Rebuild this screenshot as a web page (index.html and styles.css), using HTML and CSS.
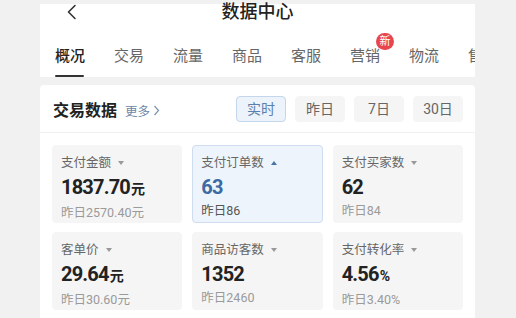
FILE: index.html
```html
<!DOCTYPE html>
<html lang="zh">
<head>
<meta charset="utf-8">
<link rel="stylesheet" href="styles.css">
</head>
<body>
<div class="page">
  <header class="top">
    <div class="title-row">
      <svg class="back" width="12" height="16" viewBox="0 0 12 16"><path d="M9 1.5 L2.5 8 L9 14.5" fill="none" stroke="#333" stroke-width="1.6" stroke-linecap="round" stroke-linejoin="round"/></svg>
      <div class="title">数据中心</div>
    </div>
    <nav class="tabs">
      <div class="tab active">概况</div>
      <div class="tab">交易</div>
      <div class="tab">流量</div>
      <div class="tab">商品</div>
      <div class="tab">客服</div>
      <div class="tab badge-tab">营销<span class="badge">新</span></div>
      <div class="tab">物流</div>
      <div class="tab">售后</div>
    </nav>
  </header>

  <section class="panel">
    <div class="panel-head">
      <div class="head-left">
        <span class="panel-title">交易数据</span>
        <span class="more">更多<svg width="7" height="11" viewBox="0 0 7 11"><path d="M1.5 1 L5.5 5.5 L1.5 10" fill="none" stroke="#7d93ad" stroke-width="1.2"/></svg></span>
      </div>
      <div class="ranges">
        <div class="range on">实时</div>
        <div class="range">昨日</div>
        <div class="range">7日</div>
        <div class="range">30日</div>
      </div>
    </div>
    <div class="grid">
      <div class="card">
        <div class="label">支付金额<i class="tri down"></i></div>
        <div class="value">1837.70<small>元</small></div>
        <div class="prev">昨日2570.40元</div>
      </div>
      <div class="card sel">
        <div class="label">支付订单数<i class="tri up"></i></div>
        <div class="value">63</div>
        <div class="prev">昨日86</div>
      </div>
      <div class="card">
        <div class="label">支付买家数<i class="tri down"></i></div>
        <div class="value">62</div>
        <div class="prev">昨日84</div>
      </div>
      <div class="card">
        <div class="label">客单价<i class="tri down"></i></div>
        <div class="value">29.64<small>元</small></div>
        <div class="prev">昨日30.60元</div>
      </div>
      <div class="card">
        <div class="label">商品访客数<i class="tri down"></i></div>
        <div class="value">1352</div>
        <div class="prev">昨日2460</div>
      </div>
      <div class="card">
        <div class="label">支付转化率<i class="tri down"></i></div>
        <div class="value">4.56<small>%</small></div>
        <div class="prev">昨日3.40%</div>
      </div>
    </div>
  </section>
</div>
</body>
</html>
```

FILE: styles.css
```css
* { box-sizing: border-box; }
html, body { margin: 0; padding: 0; }
body {
  background: #f1f1f1;
  font-family: Roboto, "Noto Sans CJK SC", "Noto Sans", sans-serif;
  color: #222;
  width: 516px;
  height: 318px;
  overflow: hidden;
}
.page {
  width: 435px;
  margin-left: 40px;
  padding-top: 4px;
}
.top {
  background: #fff;
  height: 73px;
  display: flex;
  flex-direction: column;
}
.title-row {
  position: relative;
  height: 16px;
  display: flex;
  align-items: center;
  justify-content: center;
}
.back {
  position: absolute;
  left: 26px;
  top: 0;
}
.title {
  font-size: 18px;
  line-height: 16px;
  font-weight: 500;
  color: #222;
}
.tabs {
  flex: 1;
  display: flex;
  gap: 29px;
  padding-left: 15px;
  overflow: hidden;
  white-space: nowrap;
}
.tab {
  position: relative;
  flex: none;
  font-size: 15px;
  line-height: 20px;
  padding-top: 26px;
  color: #666;
  height: 57px;
}
.tab.active {
  color: #222;
  font-weight: 500;
}
.tab.active::after {
  content: "";
  position: absolute;
  left: 0;
  right: 1px;
  bottom: 0;
  height: 2px;
  background: #333;
  border-radius: 1px;
}
.badge {
  position: absolute;
  left: 26px;
  top: 13px;
  width: 18px;
  height: 17px;
  border-radius: 9px;
  background: #e8464f;
  color: #fff;
  font-size: 11px;
  line-height: 17px;
  text-align: center;
}
.panel {
  margin-top: 8px;
  background: #fff;
  height: 240px;
  border-radius: 4px 4px 0 0;
}
.panel-head {
  display: flex;
  align-items: center;
  justify-content: space-between;
  padding: 11px 12px 10px 13px;
  border-bottom: 1px solid #f0f0f0;
}
.head-left {
  display: flex;
  align-items: baseline;
  gap: 8px;
}
.panel-title {
  font-size: 16px;
  font-weight: 700;
  color: #222;
}
.more {
  font-size: 12.5px;
  color: #6d86a6;
  display: inline-flex;
  align-items: center;
  gap: 3px;
}
.ranges {
  display: flex;
  gap: 9px;
}
.range {
  width: 50px;
  height: 26px;
  line-height: 24px;
  border: 1px solid #f5f5f5;
  background: #f5f5f5;
  border-radius: 4px;
  font-size: 14px;
  color: #666;
  text-align: center;
}
.range.on {
  background: #ecf3fb;
  border-color: #c4d6ea;
  color: #5a80ad;
}
.grid {
  display: grid;
  grid-template-columns: repeat(3, 1fr);
  column-gap: 10px;
  row-gap: 9px;
  padding: 12px 12px 0 12px;
}
.card {
  height: 78px;
  background: #f5f5f5;
  border: 1px solid #f5f5f5;
  border-radius: 4px;
  padding: 9px 8px 0 8px;
}
.card.sel {
  background: #eef4fc;
  border-color: #cddcee;
}
.label {
  font-size: 12.5px;
  line-height: 16px;
  color: #666;
  display: flex;
  align-items: center;
}
.tri {
  display: inline-block;
  margin-left: 7px;
  width: 0;
  height: 0;
  border-left: 3.5px solid transparent;
  border-right: 3.5px solid transparent;
}
.tri.down { border-top: 4px solid #999; }
.tri.up { border-bottom: 4px solid #4a74a6; }
.value {
  margin-top: 3px;
  font-size: 20px;
  line-height: 26px;
  font-weight: 700;
  color: #222;
  letter-spacing: -0.8px;
}
.value small {
  font-size: 14px;
  margin-left: 1px;
  letter-spacing: 0;
}
.card.sel .value { color: #3c6aa3; }
.prev {
  margin-top: 3px;
  font-size: 12.5px;
  line-height: 16px;
  color: #9a9a9a;
}
.card.sel .prev { color: #555; }
```
